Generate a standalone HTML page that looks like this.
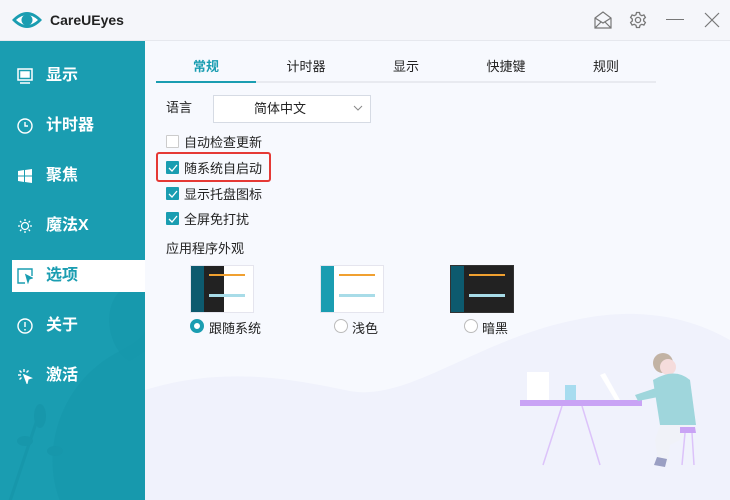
<!DOCTYPE html>
<html><head><meta charset="utf-8"><style>
*{margin:0;padding:0;box-sizing:border-box}
body{width:730px;height:500px;overflow:hidden;font-family:"Liberation Sans","Noto Sans CJK SC",sans-serif;background:#f7f9fe;position:relative;font-size:13px;color:#222}
.title{position:absolute;left:0;top:0;width:730px;height:41px;background:#f5f6fa;border-bottom:1px solid #e6e8ee}
.side{position:absolute;left:0;top:41px;width:145px;height:459px;background:#1a9db1;overflow:hidden}
.item{position:absolute;left:12px;width:133px;height:32px;color:#fff;font-weight:bold;font-size:16px;line-height:32px;padding-left:34px}
.item.act{background:#fff;color:#1a9db1}
.ico{position:absolute;left:5px;top:8px;width:16px;height:16px}
.tab{position:absolute;top:56px;width:100px;text-align:center;font-size:13px}
.abs{position:absolute}
.cb{position:absolute;left:166px;width:13px;height:13px;background:#1a9db1;border-radius:1px}
.cb.off{background:#fff;border:1px solid #ccc}
.lbl{position:absolute;left:184px;font-size:13px}
</style></head><body>
<div class="title">
<svg class="abs" style="left:11px;top:10px" width="32" height="20" viewBox="0 0 32 20"><path d="M1 10 Q16 -6 31 10 Q16 26 1 10Z" fill="#1a9db1"/><path d="M5 10 Q16 0 27 10 Q16 20 5 10Z" fill="#fff"/><circle cx="16" cy="10" r="5.5" fill="#1a9db1"/></svg>
<div class="abs" style="left:50px;top:12px;font-size:14px;font-weight:bold;color:#222">CareUEyes</div>
<svg class="abs" style="left:594px;top:11px" width="18" height="18" viewBox="0 0 18 18" fill="none" stroke="#777" stroke-width="1.2"><path d="M1 7 L9 1 L17 7 V17 H1 Z M1 7 L9 12 L17 7 M1 17 L7 11 M17 17 L11 11"/></svg>
<svg class="abs" style="left:629px;top:11px" width="18" height="18" viewBox="0 0 18 18" fill="none" stroke="#777" stroke-width="1.3"><path d="M7.5 1.5h3l.5 2.2 1.8 1 2.1-.8 1.5 2.6-1.7 1.5v2l1.7 1.5-1.5 2.6-2.1-.8-1.8 1-.5 2.2h-3l-.5-2.2-1.8-1-2.1.8-1.5-2.6 1.7-1.5v-2L1.6 6.5l1.5-2.6 2.1.8 1.8-1z"/><circle cx="9" cy="9" r="2.6"/></svg>
<div class="abs" style="left:666px;top:19px;width:18px;height:1px;background:#777"></div>
<svg class="abs" style="left:704px;top:12px" width="16" height="16" viewBox="0 0 16 16" stroke="#777" stroke-width="1.2"><path d="M1 1L15 15M15 1L1 15"/></svg>
</div>
<div class="side">
<svg class="abs" style="left:0;top:250px" width="145" height="210" viewBox="0 0 145 210"><path d="M60 210 C40 160 60 90 120 60 C140 50 150 40 145 30 V210Z" fill="#1797ab" opacity=".7"/><path d="M120 0 C100 20 110 60 130 70 L145 60 V0Z" fill="#1797ab" opacity=".7"/><path d="M10 210 C20 180 30 150 40 120" stroke="#1797ab" stroke-width="3" fill="none"/><ellipse cx="40" cy="125" rx="6" ry="12" fill="#1797ab"/><ellipse cx="25" cy="150" rx="8" ry="5" fill="#1797ab"/><ellipse cx="55" cy="160" rx="8" ry="5" fill="#1797ab"/></svg>
<div class="item" style="top:19px"><svg class="ico" viewBox="0 0 16 16" fill="none" stroke="#fff" stroke-width="1.5"><rect x="1" y="1" width="14" height="11"/><rect x="4" y="4" width="8" height="5" fill="#fff"/><path d="M3 15h10"/></svg>显示</div>
<div class="item" style="top:69px"><svg class="ico" viewBox="0 0 16 16" fill="none" stroke="#fff" stroke-width="1.4"><circle cx="8" cy="8" r="7"/><path d="M8 4v4h3"/></svg>计时器</div>
<div class="item" style="top:119px"><svg class="ico" viewBox="0 0 16 16" fill="#fff"><path d="M1 3l6-1v5.5H1zM8 2l7-1v6.5H8zM1 8.5h6V14l-6-1zM8 8.5h7V15l-7-1z"/></svg>聚焦</div>
<div class="item" style="top:169px"><svg class="ico" viewBox="0 0 16 16" fill="none" stroke="#fff" stroke-width="1.3"><circle cx="8" cy="8" r="3.5"/><path d="M8 1v2M8 13v2M1 8h2M13 8h2M3 3l1.4 1.4M11.6 11.6L13 13M13 3l-1.4 1.4M3 13l1.4-1.4"/></svg>魔法X</div>
<div class="item act" style="top:219px"><svg class="ico" viewBox="0 0 16 16" fill="none" stroke="#1a9db1" stroke-width="1.4"><path d="M15 8V1H1v14h7"/><path d="M9 7l6 3-3 1-1 3z" fill="#1a9db1"/></svg>选项</div>
<div class="item" style="top:269px"><svg class="ico" viewBox="0 0 16 16" fill="none" stroke="#fff" stroke-width="1.4"><circle cx="8" cy="8" r="7"/><path d="M8 4v5M8 11v1.5"/></svg>关于</div>
<div class="item" style="top:319px"><svg class="ico" viewBox="0 0 16 16" fill="none" stroke="#fff" stroke-width="1.4"><path d="M7 1v3M1 7h3M2.5 2.5l2 2M2.5 11.5l2-2M11.5 2.5l-2 2"/><path d="M7 7l7 3-3 1-1 4z" fill="#fff"/></svg>激活</div>
</div>
<svg class="abs" style="left:145px;top:280px" width="585" height="220" viewBox="0 0 585 220"><path d="M0 240 V110 C80 85 150 100 200 110 C260 125 330 60 430 40 C500 25 550 40 585 60 V220Z" fill="#f0f2fc"/></svg>
<svg class="abs" style="left:520px;top:345px" width="180" height="130" viewBox="0 0 180 130"><rect x="0" y="55" width="122" height="6" fill="#c9a3f5"/><rect x="7" y="27" width="22" height="28" fill="#fff"/><rect x="45" y="40" width="11" height="15" fill="#a7dcef"/><path d="M80 30 L95 55 L100 55 L85 28Z" fill="#fff"/><path d="M42 61 L23 120 M62 61 L80 120" stroke="#dcc3fa" stroke-width="1.5"/><circle cx="143" cy="18" r="10" fill="#c2b3a4"/><circle cx="148" cy="22" r="8" fill="#f5dcdc"/><path d="M133 35 Q155 22 170 35 L176 80 L140 80Z" fill="#9fd6dc"/><path d="M115 50 L145 40 L148 50 L118 56Z" fill="#9fd6dc"/><path d="M140 80 L170 80 L160 95 L150 100 L148 118 L138 115 L135 95Z" fill="#f0f2f8"/><path d="M160 82 L175 82 L176 88 L160 88Z" fill="#c9a3f5"/><path d="M165 88 L162 120 M172 88 L174 120" stroke="#dcc3fa" stroke-width="1.5"/><path d="M137 112 L147 114 L145 122 L134 120Z" fill="#9a9fc3"/></svg>
<div class="abs" style="left:156px;top:81px;width:500px;height:2px;background:#e8eaf0"></div>
<div class="abs" style="left:156px;top:81px;width:100px;height:2px;background:#1a9db1"></div>
<div class="tab" style="left:156px;color:#1a9db1;font-weight:bold">常规</div>
<div class="tab" style="left:256px">计时器</div>
<div class="tab" style="left:356px">显示</div>
<div class="tab" style="left:456px">快捷键</div>
<div class="tab" style="left:556px">规则</div>
<div class="abs" style="left:166px;top:97px">语言</div>
<div class="abs" style="left:213px;top:95px;width:158px;height:28px;background:#fff;border:1px solid #d6dbe4;text-align:center;line-height:26px;padding-right:24px">简体中文</div>
<svg class="abs" style="left:353px;top:105px" width="10" height="6" viewBox="0 0 10 6" fill="none" stroke="#888"><path d="M1 1l4 4 4-4"/></svg>
<div class="cb off" style="top:135px"></div><div class="lbl" style="top:132px">自动检查更新</div>
<div class="abs" style="left:156px;top:152px;width:115px;height:30px;border:2.5px solid #e53935;border-radius:3px"></div>
<div class="cb" style="top:161px"></div><div class="lbl" style="top:158px">随系统自启动</div>
<div class="cb" style="top:187px"></div><div class="lbl" style="top:184px">显示托盘图标</div>
<div class="cb" style="top:212px"></div><div class="lbl" style="top:209px">全屏免打扰</div>
<svg class="abs" style="left:166px;top:135px" width="13" height="100" viewBox="0 0 13 100" fill="none" stroke="#fff" stroke-width="1.3"><path d="M3 33l3 3 5-6M3 59l3 3 5-6M3 84l3 3 5-6"/></svg>
<div class="abs" style="left:166px;top:238px">应用程序外观</div>
<div class="abs" style="left:190px;top:265px;width:64px;height:48px;background:#fff;border:1px solid #e5e5ee"><div style="position:absolute;left:0;top:0;width:13px;height:46px;background:#0d5a6e"></div><div style="position:absolute;left:13px;top:0;width:20px;height:46px;background:#222"></div><div style="position:absolute;left:18px;top:8px;width:36px;height:2px;background:#f0a030"></div><div style="position:absolute;left:18px;top:28px;width:36px;height:3px;background:#a8dce8"></div></div>
<div class="abs" style="left:320px;top:265px;width:64px;height:48px;background:#fff;border:1px solid #e5e5ee"><div style="position:absolute;left:0;top:0;width:13px;height:46px;background:#1a9db1"></div><div style="position:absolute;left:18px;top:8px;width:36px;height:2px;background:#f0a030"></div><div style="position:absolute;left:18px;top:28px;width:36px;height:3px;background:#a8dce8"></div></div>
<div class="abs" style="left:450px;top:265px;width:64px;height:48px;background:#222;border:1px solid #333"><div style="position:absolute;left:0;top:0;width:13px;height:46px;background:#0d5a6e"></div><div style="position:absolute;left:18px;top:8px;width:36px;height:2px;background:#f0a030"></div><div style="position:absolute;left:18px;top:28px;width:36px;height:3px;background:#a8dce8"></div></div>
<div class="abs" style="left:190px;top:319px;width:14px;height:14px;border-radius:50%;border:4px solid #1a9db1;background:#fff"></div><div class="abs" style="left:209px;top:318px">跟随系统</div>
<div class="abs" style="left:334px;top:319px;width:14px;height:14px;border-radius:50%;border:1px solid #bbb;background:#fff"></div><div class="abs" style="left:352px;top:318px">浅色</div>
<div class="abs" style="left:464px;top:319px;width:14px;height:14px;border-radius:50%;border:1px solid #bbb;background:#fff"></div><div class="abs" style="left:482px;top:318px">暗黑</div>
</body></html>
